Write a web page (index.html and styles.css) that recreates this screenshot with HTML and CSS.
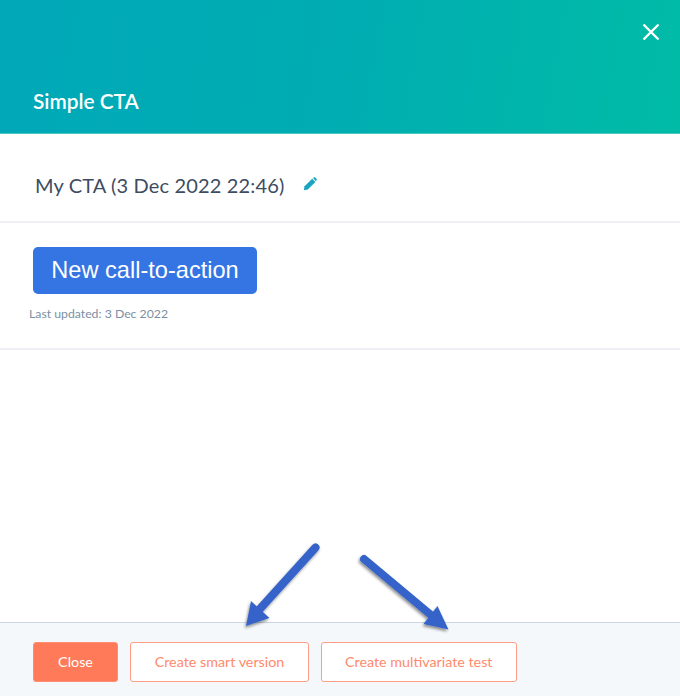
FILE: index.html
```html
<!DOCTYPE html>
<html lang="en">
<head>
<meta charset="utf-8">
<title>Simple CTA</title>
<link rel="stylesheet" href="styles.css">
</head>
<body>
<div class="modal">
  <header class="header">
    <h1 class="title">Simple CTA</h1>
    <button class="close-x" aria-label="Close">
      <svg width="18" height="18" viewBox="0 0 18 18"><path d="M1.5 1.5L16.5 16.5M16.5 1.5L1.5 16.5" stroke="#fff" stroke-width="2.4" fill="none"/></svg>
    </button>
  </header>
  <section class="name-row">
    <span class="name">My CTA (3 Dec 2022 22:46)</span>
    <svg class="pencil" width="14" height="14" viewBox="0 0 14 14"><path d="M0.8 13.2L1.6 9.2L9.2 1.8L12.4 5L4.8 12.4Z" fill="#18a5c2"/><path d="M10 1.1L11 0.3Q11.6 0 12.2 0.4L13.6 1.8Q14 2.4 13.6 3L12.9 4.2Z" fill="#18a5c2"/></svg>
  </section>
  <section class="preview">
    <div class="cta">New call-to-action</div>
    <p class="updated">Last updated: 3 Dec 2022</p>
  </section>
  <div class="spacer"></div>
  <footer class="footer">
    <button class="btn primary">Close</button>
    <button class="btn outline smart">Create smart version</button>
    <button class="btn outline multi">Create multivariate test</button>
  </footer>
</div>
<svg class="arrows" width="680" height="696" viewBox="0 0 680 696">
  <defs>
    <filter id="shadow" x="-20%" y="-20%" width="150%" height="150%">
      <feDropShadow dx="-1" dy="2" stdDeviation="1.8" flood-color="#000" flood-opacity="0.45"/>
    </filter>
  </defs>
  <g filter="url(#shadow)" fill="#3663c9" stroke="none">
    <path d="M315.5 547.5L258 611" stroke="#3663c9" stroke-width="8" stroke-linecap="round" fill="none"/>
    <path d="M246 626L251 601L269.5 618Z"/>
    <path d="M364 559L431 615" stroke="#3663c9" stroke-width="8" stroke-linecap="round" fill="none"/>
    <path d="M448.5 629.5L437.5 606L423.5 624Z"/>
  </g>
</svg>
</body>
</html>
```
FILE: styles.css
```css
* { box-sizing: border-box; }
html, body { margin: 0; padding: 0; background: #fff; }
body {
  width: 680px;
  height: 696px;
  overflow: hidden;
  position: relative;
  font-family: Lato, "Liberation Sans", sans-serif;
  color: #33475b;
}
.modal { display: flex; flex-direction: column; height: 696px; }
.header {
  height: 134px;
  flex: none;
  display: flex;
  align-items: flex-end;
  justify-content: space-between;
  padding: 0 20px 20px 33px;
  background: linear-gradient(100deg, #00a8b8 0%, #00adb2 50%, #00bca6 100%);
  border-bottom: 1px solid #4cc8c4;
  position: relative;
}
.title { margin: 0; font-size: 20.8px; line-height: 24px; font-weight: 600; color: #fff; }
.close-x {
  position: absolute;
  right: 20px;
  top: 23px;
  width: 18px;
  height: 18px;
  padding: 0;
  border: 0;
  background: none;
  display: flex;
}
.name-row {
  height: 89px;
  flex: none;
  display: flex;
  align-items: center;
  gap: 19px;
  padding: 15px 0 0 35px;
  border-bottom: 2px solid #eef0f5;
}
.name { font-size: 20px; line-height: 28px; letter-spacing: 0.15px; color: #3d4c61; }
.pencil { margin-top: -2px; }
.preview {
  height: 127px;
  flex: none;
  padding: 24px 0 0 33px;
  border-bottom: 2px solid #eef0f5;
}
.cta {
  width: 224px;
  height: 47px;
  border-radius: 5px;
  background: #3574e3;
  color: #fff;
  font-family: "Liberation Sans", Arial, sans-serif;
  font-size: 23.6px;
  line-height: 46px;
  text-align: center;
}
.updated { margin: 12px 0 0 -4px; font-size: 12.25px; line-height: 16px; color: #7c8fa3; }
.spacer { flex: 1; }
.footer {
  height: 74px;
  flex: none;
  display: flex;
  gap: 12px;
  padding: 19px 0 0 33px;
  background: #f5f8fa;
  border-top: 1px solid #cbd6e2;
}
.btn {
  height: 40px;
  border-radius: 3px;
  font-family: Lato, "Liberation Sans", sans-serif;
  font-size: 14.3px;
  line-height: 36px;
  padding: 0;
}
.primary { width: 85px; background: #ff7a59; border: 1px solid #ff8f73; color: #fff; }
.outline { background: #fff; border: 1px solid #ff9d85; color: #ff8a6c; }
.smart { width: 179px; }
.multi { width: 195.5px; }
.arrows { position: absolute; left: 0; top: 0; pointer-events: none; }
```
